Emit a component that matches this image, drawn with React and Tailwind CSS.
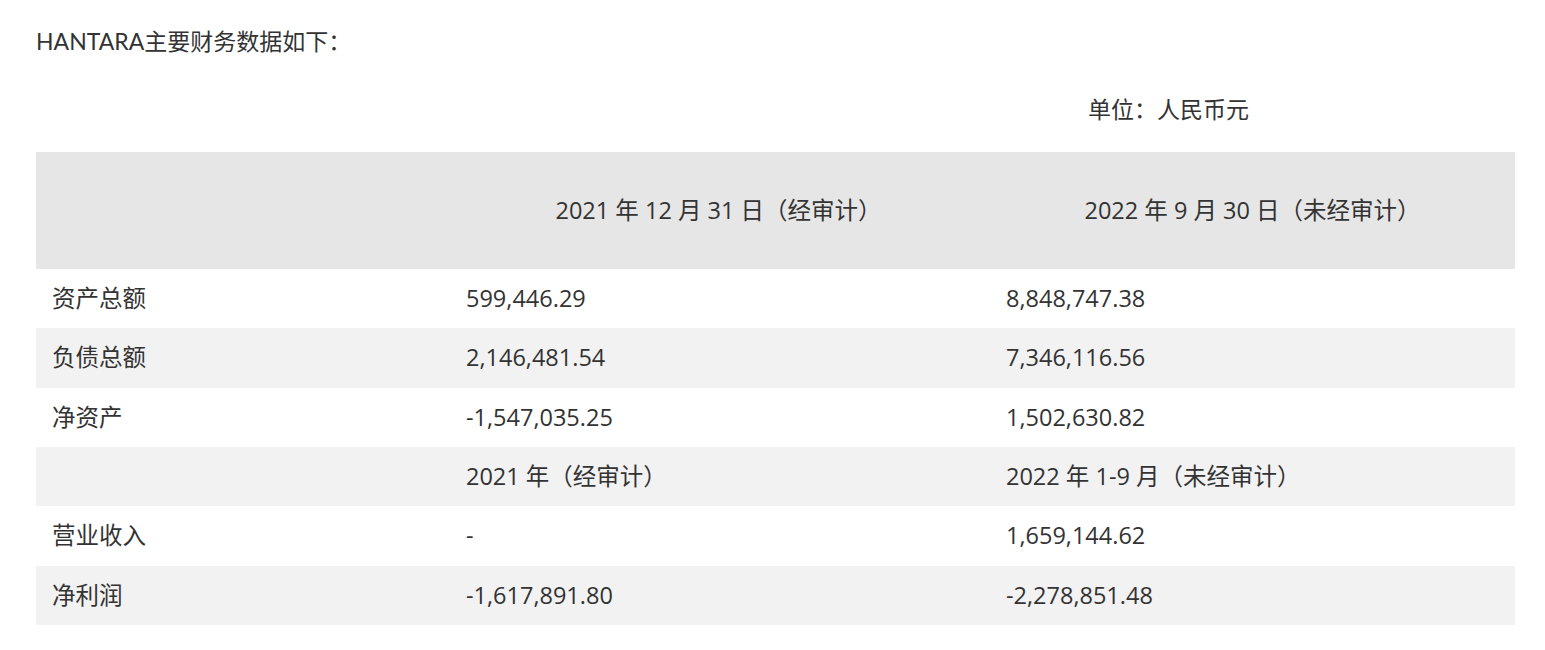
import React from "react";

const rows = [
  { label: "资产总额", a: "599,446.29", b: "8,848,747.38", bg: "bg-white" },
  { label: "负债总额", a: "2,146,481.54", b: "7,346,116.56", bg: "bg-[#f2f2f2]" },
  { label: "净资产", a: "-1,547,035.25", b: "1,502,630.82", bg: "bg-white" },
  { label: "", a: "2021 年（经审计）", b: "2022 年 1-9 月（未经审计）", bg: "bg-[#f2f2f2]" },
  { label: "营业收入", a: "-", b: "1,659,144.62", bg: "bg-white" },
  { label: "净利润", a: "-1,617,891.80", b: "-2,278,851.48", bg: "bg-[#f2f2f2]" },
];

export default function App() {
  return (
    <div className="w-[1545px] h-[650px] bg-white text-[#333] overflow-hidden">
      <div className="pl-[36px] pt-[25px] text-[23px] leading-[32px] font-['Lato','Noto_Sans_CJK_SC',sans-serif]">
        HANTARA主要财务数据如下：
      </div>
      <div className="pl-[1088px] mt-[36px] text-[23px] leading-[32px] font-['Open_Sans','Noto_Sans_CJK_SC',sans-serif]">
        单位：人民币元
      </div>
      <table className="ml-[36px] mt-[27px] w-[1479px] table-fixed border-collapse text-[23.5px] font-['Open_Sans','Noto_Sans_CJK_SC',sans-serif]">
        <colgroup>
          <col className="w-[414px]" />
          <col className="w-[540px]" />
          <col className="w-[525px]" />
        </colgroup>
        <thead>
          <tr className="h-[117px] bg-[#e6e6e6]">
            <th className="font-normal p-0"></th>
            <th className="font-normal p-0 text-center pr-[3px]">2021 年 12 月 31 日（经审计）</th>
            <th className="font-normal p-0 text-center">2022 年 9 月 30 日（未经审计）</th>
          </tr>
        </thead>
        <tbody>
          {rows.map((r, i) => (
            <tr key={i} className={`h-[59.33px] ${r.bg}`}>
              <td className="pl-[16px] py-0 text-left">{r.label}</td>
              <td className="pl-[16px] py-0 text-left">{r.a}</td>
              <td className="pl-[16px] py-0 text-left">{r.b}</td>
            </tr>
          ))}
        </tbody>
      </table>
    </div>
  );
}
